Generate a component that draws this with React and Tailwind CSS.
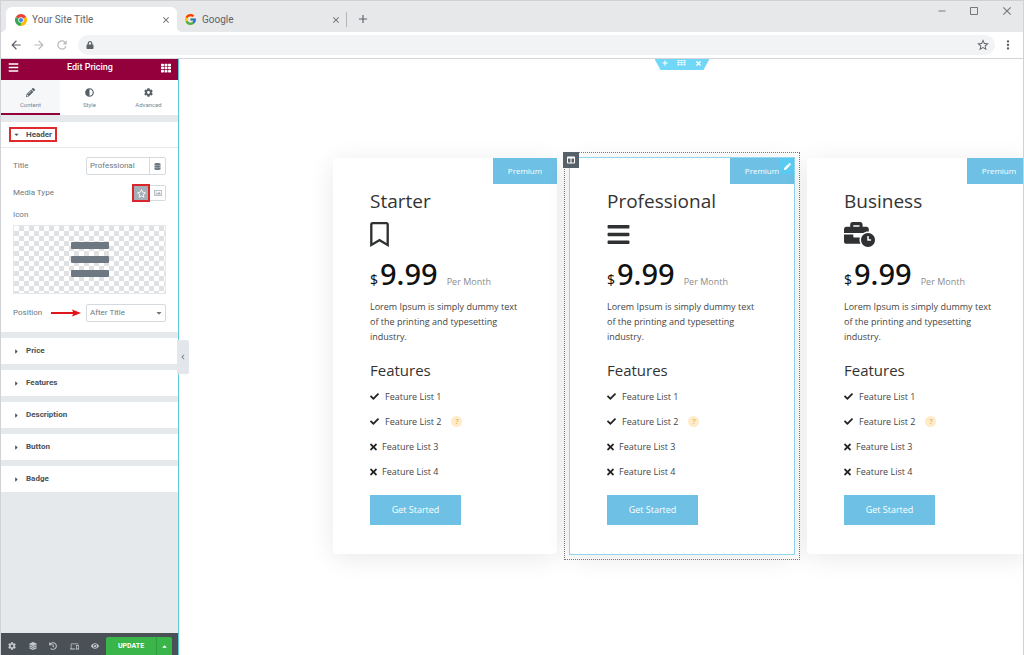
import React, { useState } from 'react';
import {
  FaRegBookmark, FaBars, FaBusinessTime, FaCheck, FaTimes, FaLock, FaPencilAlt, FaAdjust, FaCog,
  FaTh, FaDatabase, FaCaretDown, FaCaretRight, FaCaretUp, FaLayerGroup, FaHistory, FaEye, FaRegStar,
  FaRegImage, FaColumns, FaPlus, FaPen,
} from 'react-icons/fa';
import { FcGoogle } from 'react-icons/fc';
import {
  MdArrowBack, MdArrowForward, MdRefresh, MdStarBorder, MdMoreVert, MdClose, MdAdd, MdRemove,
  MdCropSquare, MdOutlineDevices, MdChevronLeft,
} from 'react-icons/md';

const plans = [
  { name: 'Starter', icon: <FaRegBookmark className="h-[25px] w-[19px]" /> },
  { name: 'Professional', icon: <FaBars className="h-[25px] w-[23px]" />, selected: true },
  { name: 'Business', icon: <FaBusinessTime className="h-[25px] w-[31px]" /> },
];

const features = [
  { label: 'Feature List 1', included: true },
  { label: 'Feature List 2', included: true, hint: true },
  { label: 'Feature List 3', included: false },
  { label: 'Feature List 4', included: false },
];

const ChromeLogo = () => (
  <svg viewBox="0 0 48 48" className="size-3 shrink-0">
    <path d="M24 24 L3.2 12 A24 24 0 0 1 44.8 12 Z" fill="#ea4335" />
    <path d="M24 24 L44.8 12 A24 24 0 0 1 24 48 Z" fill="#fbbc05" />
    <path d="M24 24 L24 48 A24 24 0 0 1 3.2 12 Z" fill="#34a853" />
    <path d="M24 13 H45.3 L44 10.8 H24 Z" fill="#ea4335" />
    <path d="M33.5 29.5 L24 48 H20 L30 31 Z" fill="#fbbc05" />
    <circle cx="24" cy="24" r="11" fill="#fff" />
    <circle cx="24" cy="24" r="8.5" fill="#4285f4" />
  </svg>
);

const DragDots = () => (
  <svg viewBox="0 0 9 6" className="h-[6px] w-[9px]" fill="currentColor">
    {[0, 2, 4].map((y) => [0, 3, 6].map((x) => <rect key={`${x}-${y}`} x={x + 0.5} y={y} width="2" height="1.4" />))}
  </svg>
);

const BrowserChrome = () => (
  <header className="shrink-0 border-b border-[#d3d5d8] text-[#5f6368]">
    <div className="flex h-8 items-end border-t border-[#cfd1d4] bg-[#e7e8ea] pl-[5px]">
      <div className="relative flex h-[25px] w-[171px] items-center rounded-t-md bg-white pl-[9px] pr-[6px] before:absolute before:bottom-0 before:-left-[5px] before:size-[5px] before:bg-[radial-gradient(circle_at_0_0,transparent_5px,white_5px)] after:absolute after:-right-[5px] after:bottom-0 after:size-[5px] after:bg-[radial-gradient(circle_at_100%_0,transparent_5px,white_5px)]">
        <ChromeLogo />
        <span className="ml-[5px] flex-1 text-[10px]">Your Site Title</span>
        <button aria-label="Close tab"><MdClose className="size-[10px]" /></button>
      </div>
      <div className="flex h-[25px] w-[169px] items-center pl-[7px] pr-[5px]">
        <FcGoogle className="size-[13px]" />
        <span className="ml-[5px] flex-1 text-[10px]">Google</span>
        <button aria-label="Close tab"><MdClose className="size-[10px]" /></button>
      </div>
      <div className="mb-[5px] h-[15px] w-px bg-[#b4b7ba]" />
      <button aria-label="New tab" className="mb-[6px] ml-[9px]"><MdAdd className="size-[14px]" /></button>
      <div className="ml-auto flex items-center gap-[20px] self-start pt-[3px] pr-[9px] text-[#75787c]">
        <button aria-label="Minimize"><MdRemove className="size-3" /></button>
        <button aria-label="Maximize"><MdCropSquare className="size-3" /></button>
        <button aria-label="Close window"><MdClose className="size-[14px]" /></button>
      </div>
    </div>
    <div className="flex h-[26px] items-center bg-white pl-2 pr-[8px]">
      <button aria-label="Back"><MdArrowBack className="size-[14px]" /></button>
      <button aria-label="Forward" className="ml-[9px] text-[#b9bbbe]"><MdArrowForward className="size-[14px]" /></button>
      <button aria-label="Reload" className="ml-[9px] text-[#b9bbbe]"><MdRefresh className="size-[14px]" /></button>
      <div className="ml-[9px] flex h-5 flex-1 items-center rounded-full bg-[#f1f3f4] pl-2 pr-[5px]">
        <FaLock className="size-[8px]" />
        <input aria-label="Address" className="h-full flex-1 bg-transparent px-2 text-[10px] outline-none" />
        <button aria-label="Bookmark"><MdStarBorder className="size-[14px]" /></button>
      </div>
      <button aria-label="Menu" className="ml-[6px]"><MdMoreVert className="size-[14px]" /></button>
    </div>
  </header>
);

const PanelTab = ({ Icon, label, active }) => (
  <button
    className={`flex flex-1 flex-col items-center gap-[3px] border-b-2 pt-2 text-[6px] leading-[10px] text-[#7d8790] ${
      active ? 'border-[#93003c] bg-[#f6f7f9]' : 'border-transparent'
    }`}
  >
    <Icon className="size-[9px] text-[#556068]" />
    {label}
  </button>
);

const Panel = () => {
  const [title, setTitle] = useState('Professional');
  const [media, setMedia] = useState('icon');

  return (
    <aside className="relative flex w-[178px] shrink-0 flex-col border-r border-[#5fcbd9] bg-[#e6e9ec]">
      <div className="flex h-[21px] shrink-0 items-center justify-between bg-[#93003c] px-[7px] pb-1 text-white">
        <button aria-label="Menu"><FaBars className="size-[11px]" /></button>
        <h1 className="text-[9px] font-medium">Edit Pricing</h1>
        <button aria-label="Widgets"><FaTh className="size-[10px]" /></button>
      </div>
      <nav className="flex h-[35px] shrink-0 bg-white">
        <PanelTab Icon={FaPencilAlt} label="Content" active />
        <PanelTab Icon={FaAdjust} label="Style" />
        <PanelTab Icon={FaCog} label="Advanced" />
      </nav>

      <section className="mt-[7px] bg-white text-[8px] text-[#6d7882]">
        <div className="border-b border-[#e6e9ec] px-2 py-[5px]">
          <button className="flex h-[15px] w-12 items-center gap-[6px] border-2 border-[#e02a2e] pl-[2px] font-bold text-[#495157]">
            <FaCaretDown className="size-[7px]" />
            Header
          </button>
        </div>
        <div className="px-3 pb-[10px]">
          <div className="mt-[9px] flex h-[18px] items-center justify-between">
            <label htmlFor="title">Title</label>
            <div className="flex h-full w-20 rounded-xs border border-[#d5dadf]">
              <input
                id="title"
                value={title}
                onChange={(e) => setTitle(e.target.value)}
                className="w-full min-w-0 flex-1 pl-[3px] outline-none"
              />
              <button aria-label="Dynamic tags" className="flex w-4 shrink-0 items-center justify-center border-l border-[#d5dadf]">
                <FaDatabase className="size-[7px]" />
              </button>
            </div>
          </div>
          <fieldset className="mt-[9px] flex h-[18px] items-center">
            <legend className="float-left mr-auto">Media Type</legend>
            <label className="flex h-[18px] w-[18px] items-center justify-center border-2 border-[#d9252b] bg-[#a4afb7] text-white">
              <input type="radio" name="media" className="sr-only" aria-label="Icon" checked={media === 'icon'} onChange={() => setMedia('icon')} />
              <FaRegStar className="size-[9px]" />
            </label>
            <label className="flex h-4 w-4 items-center justify-center rounded-r-xs border border-l-0 border-[#d5dadf] text-[#a4afb7]">
              <input type="radio" name="media" className="sr-only" aria-label="Image" checked={media === 'image'} onChange={() => setMedia('image')} />
              <FaRegImage className="size-2" />
            </label>
          </fieldset>
          <p className="mt-[7px] leading-3">Icon</p>
          <button
            aria-label="Choose icon"
            className="mt-1 flex h-[69px] w-full items-center justify-center border border-[#e6e9ec] bg-[repeating-conic-gradient(#e0e1e2_0_25%,white_0_50%)] bg-size-[10px_10px]"
          >
            <svg viewBox="0 0 38 36" className="h-9 w-[38px]" fill="#6d7882">
              <rect width="38" height="7" y="0" rx="1" />
              <rect width="38" height="7" y="14" rx="1" />
              <rect width="38" height="7" y="28" rx="1" />
            </svg>
          </button>
          <div className="mt-[10px] flex h-[18px] items-center">
            <label htmlFor="position">Position</label>
            <svg viewBox="0 0 30 8" className="ml-auto h-2 w-[30px]">
              <path d="M0 3 H22 L21 0.5 L30 4 L21 7.5 L22 5 H0 Z" fill="#e0161c" />
            </svg>
            <div className="relative ml-[5px] h-full w-20">
              <select id="position" className="h-full w-full appearance-none rounded-xs border border-[#d5dadf] bg-white pl-[3px] outline-none">
                <option>After Title</option>
                <option>Before Title</option>
              </select>
              <FaCaretDown className="pointer-events-none absolute top-[5px] right-[3px] size-2" />
            </div>
          </div>
        </div>
      </section>

      {['Price', 'Features', 'Description', 'Button', 'Badge'].map((name) => (
        <button key={name} className="mt-[6px] flex h-[26px] shrink-0 items-center gap-[6px] bg-white pl-3 text-[8px] font-bold text-[#495157]">
          <FaCaretRight className="size-[7px]" />
          {name}
        </button>
      ))}

      <footer className="mt-auto flex h-[22px] shrink-0 items-center bg-[#495157] pr-[6px] text-[#c2c7cb]">
        <div className="flex flex-1 items-center justify-between pt-1 pr-[7px] pl-[7px]">
          <button aria-label="Settings"><FaCog className="size-[8px]" /></button>
          <button aria-label="Navigator"><FaLayerGroup className="size-[8px]" /></button>
          <button aria-label="History"><FaHistory className="size-[8px]" /></button>
          <button aria-label="Responsive mode"><MdOutlineDevices className="size-[9px]" /></button>
          <button aria-label="Preview"><FaEye className="size-[8px]" /></button>
        </div>
        <button className="mt-1 h-[18px] w-[50px] rounded-tl-xs bg-[#39b54a] text-[7px] font-bold text-white">UPDATE</button>
        <button aria-label="Save options" className="mt-1 flex h-[18px] w-4 items-center justify-center rounded-tr-xs border-l border-[#2f9c3e] bg-[#39b54a] text-white">
          <FaCaretUp className="size-[7px]" />
        </button>
      </footer>

      <button
        aria-label="Hide panel"
        className="absolute top-[281px] -right-[11px] flex h-[34px] w-3 items-center justify-center rounded-r-xs bg-[#e3e6ea] text-[#6d7882]"
      >
        <MdChevronLeft className="size-[10px]" />
      </button>
    </aside>
  );
};

const PricingCard = ({ name, icon, selected }) => (
  <article className="relative w-[224px] shrink-0 rounded-sm bg-white px-[37px] pt-[30px] pb-[29px] shadow-[0_4px_26px_rgba(0,0,0,0.09)]">
    <span className="absolute top-0 right-0 flex h-[26px] w-16 items-center justify-center bg-[#6ec1e4] text-[8px] text-white">
      Premium
    </span>
    {selected && (
      <>
        <div className="pointer-events-none absolute -inset-px border border-[#8fd6ee]" />
        <div className="pointer-events-none absolute -inset-[6px] border border-dotted border-[#777]" />
        <button aria-label="Edit column" className="absolute -top-[6px] -left-[7px] flex size-4 items-center justify-center bg-[#556068] text-white">
          <FaColumns className="size-2" />
        </button>
        <button aria-label="Edit widget" className="absolute top-0 right-0 flex h-4 w-[14px] items-center justify-center bg-[#5bcaf3] text-white">
          <FaPen className="size-[7px]" />
        </button>
      </>
    )}
    <h2 className="text-[19px] leading-[26px] text-[#333]">{name}</h2>
    <div className="mt-2 text-[#2f3133]">{icon}</div>
    <div className="mt-[11px] flex items-baseline font-['Noto_Sans',sans-serif] leading-8 text-[#111]">
      <span className="text-[14px]">$</span>
      <span className="ml-[2px] text-[29px] font-medium">9.99</span>
      <span className="ml-[9px] font-['Open_Sans',sans-serif] text-[9px] text-[#8c8c8c]">Per Month</span>
    </div>
    <p className="mt-px text-[9px] leading-[15px] text-[#444]">
      Lorem Ipsum is simply dummy text of the printing and typesetting industry.
    </p>
    <h3 className="mt-[14px] text-[15px] leading-6 text-[#333]">Features</h3>
    <ul className="mt-[2px] text-[9px] leading-[25px] text-[#444]">
      {features.map(({ label, included, hint }) => (
        <li key={label} className="flex items-center">
          {included ? <FaCheck className="mr-[6px] size-[9px] text-[#222]" /> : <FaTimes className="mr-[5px] h-[10px] w-[7px] text-[#222]" />}
          {label}
          {hint && (
            <span className="ml-[10px] flex size-[11px] items-center justify-center rounded-full bg-[#ffebc8] text-[7px] leading-none text-[#d9a441]">?</span>
          )}
        </li>
      ))}
    </ul>
    <button className="mt-[11px] h-[30px] w-[91px] bg-[#6ec1e4] text-[9px] text-white">Get Started</button>
  </article>
);

const App = () => (
  <div className="flex h-screen flex-col overflow-hidden border-x border-[#d0d2d5] bg-white font-['Roboto',sans-serif]">
    <BrowserChrome />
    <div className="flex min-h-0 flex-1">
      <Panel />
      <main className="min-w-0 flex-1 overflow-hidden font-['Open_Sans',sans-serif]">
        <div className="min-w-[1006px]">
          <div className="mx-auto flex h-[11px] w-[55px] items-start justify-center gap-[9px] bg-[#71d7f7] pt-px text-white [clip-path:polygon(0_0,100%_0,89%_100%,11%_100%)]">
            <button aria-label="Add section"><FaPlus className="size-[6px]" /></button>
            <button aria-label="Edit section"><DragDots /></button>
            <button aria-label="Delete section"><FaTimes className="size-[7px]" /></button>
          </div>
          <div className="flex justify-center gap-[13px] pt-[88px]">
            {plans.map((plan) => (
              <PricingCard key={plan.name} {...plan} />
            ))}
          </div>
        </div>
      </main>
    </div>
  </div>
);

export default App;
